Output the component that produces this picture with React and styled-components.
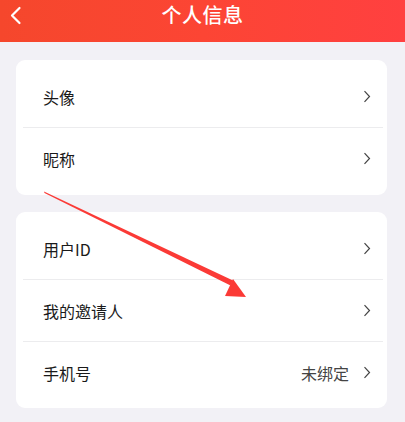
import React from "react";
import styled, { createGlobalStyle } from "styled-components";

const Global = createGlobalStyle`
  html, body { margin: 0; padding: 0; }
  body {
    background: #f2f1f6;
    font-family: "Noto Sans CJK SC", "Noto Sans", sans-serif;
    width: 405px;
    height: 422px;
    overflow: hidden;
  }
`;

const Page = styled.div`
  position: relative;
  width: 405px;
  height: 422px;
  background: #f2f1f6;
`;

const Header = styled.div`
  height: 42px;
  background: linear-gradient(90deg, #f5472c 0%, #fc4534 50%, #ff4040 100%);
  display: flex;
  align-items: flex-start;
  justify-content: center;
  position: relative;
`;

const Title = styled.div`
  color: #fff;
  font-size: 20px;
  font-weight: 500;
  line-height: 30px;
  letter-spacing: 0.5px;
`;

const Back = styled.svg`
  position: absolute;
  left: 9px;
  top: 6px;
`;

const Content = styled.div`
  padding: 18px 18px 0 16px;
  display: flex;
  flex-direction: column;
  gap: 17px;
`;

const Card = styled.div`
  background: #fff;
  border-radius: 9px;
  padding: 6px 0 ${(p) => p.$pb || 6}px;
`;

const Row = styled.div`
  height: 61px;
  display: flex;
  align-items: center;
  padding: 0 16px 0 27px;
  border-top: ${(p) => (p.$first ? "none" : "1px solid #ececee")};
  margin: 0 4px 0 7px;
  padding-left: 20px;
  padding-right: 12px;
`;

const Label = styled.div`
  flex: 1;
  font-size: 16px;
  color: #1a1a1a;
  line-height: 20px;
`;

const Value = styled.div`
  font-size: 16px;
  color: #444;
  margin-right: 14px;
`;

const Chevron = () => (
  <svg width="8" height="13" viewBox="0 0 8 13">
    <path d="M1.5 1.2 L6.5 6.5 L1.5 11.8" fill="none" stroke="#444" strokeWidth="1.2" />
  </svg>
);

const Arrow = styled.svg`
  position: absolute;
  left: 0;
  top: 0;
  pointer-events: none;
`;

const Item = ({ label, value, first }) => (
  <Row $first={first}>
    <Label>{label}</Label>
    {value && <Value>{value}</Value>}
    <Chevron />
  </Row>
);

export default function App() {
  return (
    <Page>
      <Global />
      <Header>
        <Back width="14" height="20" viewBox="0 0 14 20">
          <path d="M10.5 2 L3 9.5 L10.5 17" fill="none" stroke="#fff" strokeWidth="2.2" strokeLinecap="round" strokeLinejoin="round" />
        </Back>
        <Title>个人信息</Title>
      </Header>
      <Content>
        <Card>
          <Item label="头像" first />
          <Item label="昵称" />
        </Card>
        <Card $pb={5}>
          <Item label="用户ID" first />
          <Item label="我的邀请人" />
          <Item label="手机号" value="未绑定" />
        </Card>
      </Content>
      <Arrow width="405" height="422" viewBox="0 0 405 422">
        <polygon points="44,191.5 44.5,193 230.5,285.5 233,280.5" fill="#fb3a36" />
        <polygon points="233,279 225,296 246,297" fill="#fb3a36" />
      </Arrow>
    </Page>
  );
}
